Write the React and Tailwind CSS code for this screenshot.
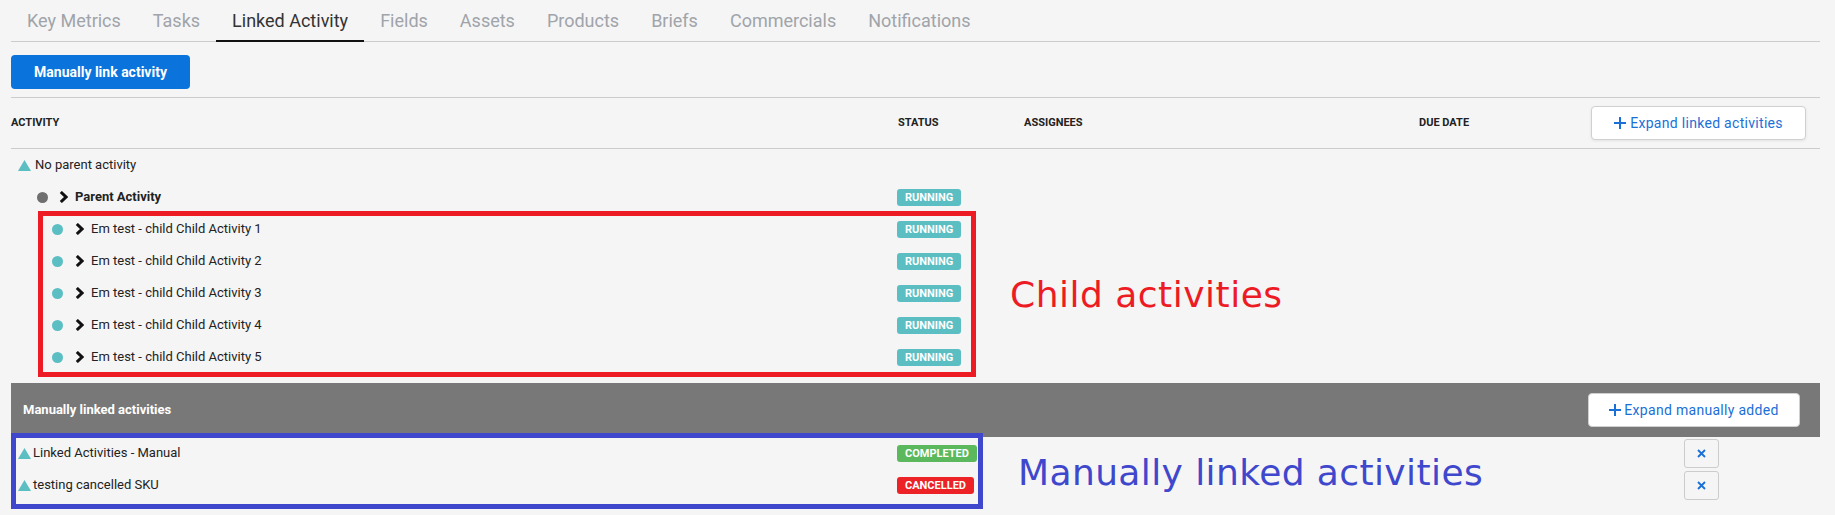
import React from 'react';

const tabs = [
  'Key Metrics',
  'Tasks',
  'Linked Activity',
  'Fields',
  'Assets',
  'Products',
  'Briefs',
  'Commercials',
  'Notifications',
];

const children = [1, 2, 3, 4, 5].map((n) => `Em test - child Child Activity ${n}`);

const badgeColors = {
  RUNNING: 'bg-[#5bbec3]',
  COMPLETED: 'bg-[#5cb85c]',
  CANCELLED: 'bg-[#ec2227]',
};

const Badge = ({ status }) => (
  <span
    className={`inline-flex h-[17px] items-center rounded-[3px] px-[8px] text-[11px] font-bold leading-none text-white ${badgeColors[status]}`}
  >
    {status}
  </span>
);

const Triangle = () => (
  <svg width="13" height="11" viewBox="0 0 13 11" className="shrink-0">
    <polygon points="6.5,0 13,11 0,11" fill="#5bbec3" />
  </svg>
);

const Chevron = () => (
  <svg width="9" height="12" viewBox="0 0 9 12" className="shrink-0">
    <path d="M1.8 1 L7 6 L1.8 11" fill="none" stroke="#111" strokeWidth="3" strokeLinejoin="miter" />
  </svg>
);

const Plus = () => (
  <svg width="12" height="12" viewBox="0 0 12 12" className="shrink-0">
    <path d="M6 0 V12 M0 6 H12" stroke="#1a6fd8" strokeWidth="2" />
  </svg>
);

const rowGrid = 'grid grid-cols-[886px_127px_395px_1fr] items-center';

const App = () => {
  return (
    <div
      className="relative min-h-[515px] w-full bg-[#f5f5f5] text-[#222]"
      style={{ fontFamily: 'Roboto, "Liberation Sans", sans-serif' }}
    >
      <div className="ml-[11px] w-[1809px]">
        {/* tabs */}
        <div className="flex border-b border-[#cccccc]">
          {tabs.map((t) => {
            const active = t === 'Linked Activity';
            return (
              <div
                key={t}
                className={`-mb-px flex h-[42px] items-center border-b-2 px-4 text-[18px] ${
                  active ? 'border-[#111] text-[#333]' : 'border-transparent text-[#a0a4aa]'
                }`}
              >
                {t}
              </div>
            );
          })}
        </div>

        <div className="border-b border-[#cccccc] pt-[13px] pb-[8px]">
          <button className="h-[34px] w-[179px] rounded-[4px] bg-[#0a73dc] text-[14px] font-bold text-white">
            Manually link activity
          </button>
        </div>

        {/* header */}
        <div className={`${rowGrid} h-[51px] border-b border-[#cccccc] text-[11px] font-bold uppercase text-[#222]`}>
          <div>Activity</div>
          <div className="pl-[1px]">Status</div>
          <div>Assignees</div>
          <div className="flex items-center justify-between">
            <span>Due date</span>
            <button className="mr-[14px] flex h-[34px] w-[215px] items-center justify-center gap-[4px] rounded-[4px] border border-[#d0d0d0] bg-white text-[14px] font-normal normal-case tracking-[0.3px] text-[#1a6fd8] shadow-[0_1px_3px_rgba(0,0,0,0.08)]">
              <Plus />
              Expand linked activities
            </button>
          </div>
        </div>

        {/* linked tree */}
        <div className="mb-[10px] text-[13px]">
          <div className={`${rowGrid} h-[32px]`}>
            <div className="flex items-center gap-[4px] pl-[7px]">
              <Triangle />
              <span>No parent activity</span>
            </div>
          </div>

          <div className={`${rowGrid} h-[32px]`}>
            <div className="flex items-center pl-[26px]">
              <span className="h-[11px] w-[11px] rounded-full bg-[#6f6f6f]" />
              <span className="ml-[11px] flex"><Chevron /></span>
              <span className="ml-[7px] font-bold">Parent Activity</span>
            </div>
            <div>
              <Badge status="RUNNING" />
            </div>
          </div>

          {children.map((c) => (
            <div key={c} className={`${rowGrid} h-[32px]`}>
              <div className="flex items-center pl-[41px]">
                <span className="h-[11px] w-[11px] rounded-full bg-[#5bbec3]" />
                <span className="ml-[12px] flex"><Chevron /></span>
                <span className="ml-[7px]">{c}</span>
              </div>
              <div>
                <Badge status="RUNNING" />
              </div>
            </div>
          ))}
        </div>

        {/* manually linked */}
        <div className="flex h-[54px] items-center justify-between bg-[#787878] pl-[12px] pr-[20px]">
          <span className="text-[13px] font-bold text-white">Manually linked activities</span>
          <button className="flex h-[34px] w-[212px] items-center justify-center gap-[3px] rounded-[4px] border border-[#d0d0d0] bg-white text-[14px] tracking-[0.3px] text-[#1a6fd8]">
            <Plus />
            Expand manually added
          </button>
        </div>

        <div className="text-[13px]">
          {[
            ['Linked Activities - Manual', 'COMPLETED'],
            ['testing cancelled SKU', 'CANCELLED'],
          ].map(([name, status]) => (
            <div key={name} className={`${rowGrid} h-[32px]`}>
              <div className="flex items-center gap-[2px] pl-[7px]">
                <Triangle />
                <span>{name}</span>
              </div>
              <div>
                <Badge status={status} />
              </div>
              <div />
              <div>
                <button className="ml-[265px] flex h-[29px] w-[35px] items-center justify-center rounded-[3px] border border-[#cccccc] bg-[#f5f5f5]">
                  <svg width="9" height="9" viewBox="0 0 9 9">
                    <path d="M1 1 L8 8 M8 1 L1 8" stroke="#1a6fd8" strokeWidth="1.8" />
                  </svg>
                </button>
              </div>
            </div>
          ))}
        </div>
      </div>

      {/* annotations drawn over the screenshot */}
      <div className="pointer-events-none absolute left-[38px] top-[211px] h-[166px] w-[938px] border-[5px] border-[#ed1c24]" />
      <div className="pointer-events-none absolute left-[11px] top-[433px] h-[76px] w-[972px] border-[5px] border-[#3f48cc]" />
      <div
        className="pointer-events-none absolute left-[1010px] top-[277px] whitespace-nowrap text-[36px] leading-none tracking-[0.5px] text-[#ed1c24]"
        style={{ fontFamily: '"DejaVu Sans", sans-serif' }}
      >
        Child activities
      </div>
      <div
        className="pointer-events-none absolute left-[1018px] top-[455px] whitespace-nowrap text-[36px] leading-none tracking-[0.4px] text-[#3f48cc]"
        style={{ fontFamily: '"DejaVu Sans", sans-serif' }}
      >
        Manually linked activities
      </div>
    </div>
  );
};

export default App;
